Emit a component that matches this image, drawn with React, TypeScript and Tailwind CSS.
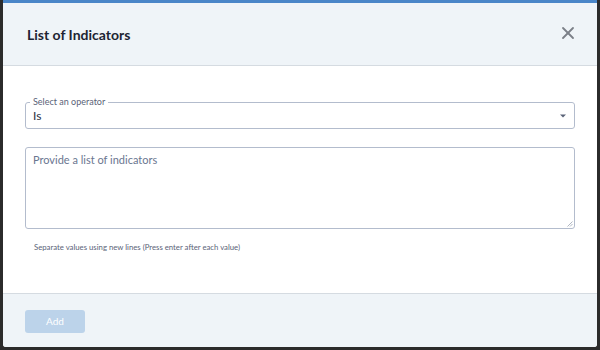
import { X } from "lucide-react"

export default function App() {
  return (
    <div className="w-[600px] h-[350px] bg-[#2b2b2b] pl-[3px] pr-[3px] pb-[3px] font-['Lato',sans-serif]">
      <div className="h-full flex flex-col bg-white rounded-b-[3px] overflow-hidden border-t-[3px] border-[#4a86c8]">
        {/* Header */}
        <div className="h-[63px] shrink-0 flex items-center justify-between pl-[24px] pr-[19px] bg-[#eff4f8] border-b border-[#d5dbe1]">
          <h2 className="text-[14px] font-bold text-[#1d2433] pt-[1px]">List of Indicators</h2>
          <X size={20} strokeWidth={2.2} className="text-[#7b8088] mb-[3px]" />
        </div>

        {/* Body */}
        <div className="flex-1 px-[22px] pt-[36px]">
          <div className="relative h-[27px] border border-[#b3bccd] rounded-[3px] flex items-center justify-between pl-[7px] pr-[8px]">
            <span className="absolute -top-[7px] left-[4px] bg-white px-[3px] text-[9px] leading-[12px] text-[#5a6378]">Select an operator</span>
            <span className="text-[12px] text-[#2a3142] pt-[1px]">Is</span>
            <svg width="6" height="4" viewBox="0 0 6 4">
              <path d="M0 0.5h6L3 3.5z" fill="#5a6378" />
            </svg>
          </div>

          <div className="relative mt-[18px] h-[82px] border border-[#b3bccd] rounded-[3px] pl-[7px] pt-[5px]">
            <span className="block text-[11px] leading-[14px] text-[#6a7690]">Provide a list of indicators</span>
            <svg width="6" height="6" viewBox="0 0 6 6" className="absolute right-[1px] bottom-[1px]">
              <path d="M5.5 0.5L0.5 5.5M5.5 3L3 5.5" stroke="#9aa3b2" strokeWidth="0.8" />
            </svg>
          </div>

          <p className="mt-[13px] pl-[9px] text-[7.75px] text-[#5a6378]">Separate values using new lines (Press enter after each value)</p>
        </div>

        {/* Footer */}
        <div className="h-[54px] shrink-0 bg-[#eff4f8] border-t border-[#d5dbe1] flex items-center pl-[22px]">
          <button className="w-[60px] h-[23px] rounded-[3px] bg-[#bcd3ea] text-white text-[10px] mt-[1px]">Add</button>
        </div>
      </div>
    </div>
  )
}
